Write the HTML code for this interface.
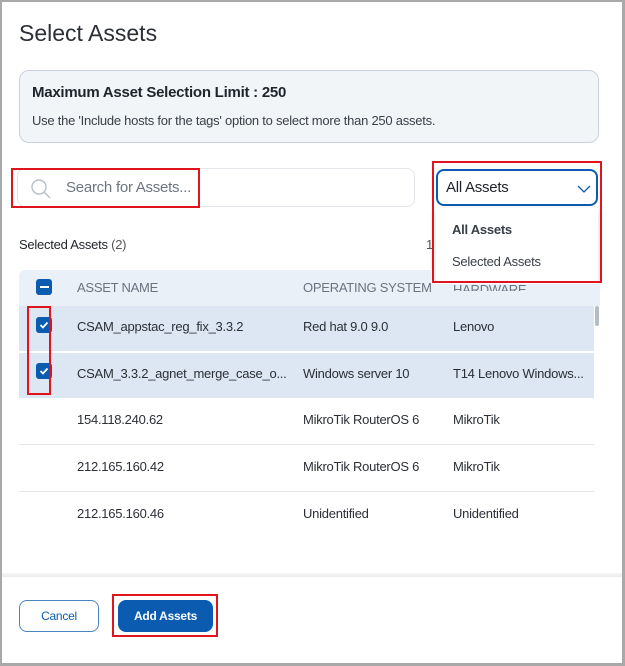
<!DOCTYPE html>
<html><head><meta charset="utf-8"><style>
*{box-sizing:border-box;margin:0;padding:0}
body{width:625px;height:666px;position:relative;overflow:hidden;background:#fff;font-family:"Liberation Sans",Arial,sans-serif;color:#2b2f36}
.frame{position:absolute;left:0;top:0;width:625px;height:666px;border:2px solid #a9a9a9;border-right-width:3px;border-bottom-width:3px}
.abs{position:absolute}
.red{position:absolute;border:2px solid #e0141c}
.t{position:absolute;white-space:nowrap;font-size:13px;letter-spacing:-0.25px}
.cb{position:absolute;width:16px;height:16px;border-radius:3px;background:#0b5cb0}
.row{position:absolute;left:19px;width:575px;border-bottom:1px solid #e3e6ea}
</style></head><body>
<div class="t" style="left:19px;top:20px;font-size:23px;color:#2b2f36;letter-spacing:0">Select Assets</div>
<div class="abs" style="left:19px;top:70px;width:580px;height:73px;background:#f2f5f8;border:1px solid #c9d2dc;border-radius:10px"></div>
<div class="t" style="left:32px;top:84px;font-size:15px;font-weight:bold;color:#1f242b">Maximum Asset Selection Limit : 250</div>
<div class="t" style="left:32px;top:113px;font-size:13px;color:#3a4048">Use the 'Include hosts for the tags' option to select more than 250 assets.</div>

<div class="abs" style="left:17px;top:168px;width:398px;height:39px;border:1px solid #e3e6ea;border-radius:8px"></div>
<svg class="abs" style="left:30px;top:178px" width="22" height="22" viewBox="0 0 22 22"><circle cx="9" cy="9" r="7" fill="none" stroke="#b8bfc8" stroke-width="1.4"/><path d="M14 14l6 6" stroke="#b8bfc8" stroke-width="1.4"/></svg>
<div class="t" style="left:66px;top:179px;font-size:15px;color:#6d7580">Search for Assets...</div>
<div class="red" style="left:11px;top:168px;width:189px;height:40px"></div>

<div class="abs" style="left:436px;top:169px;width:162px;height:37px;border:2px solid #0b5cb0;border-radius:8px"></div>
<div class="t" style="left:446px;top:179px;font-size:15px;color:#1f242b">All Assets</div>
<svg class="abs" style="left:577px;top:184px" width="14" height="10" viewBox="0 0 14 10"><path d="M1 2l6 6 6-6" fill="none" stroke="#0b5cb0" stroke-width="1.3"/></svg>
<div class="abs" style="left:436px;top:208px;width:162px;height:76px;background:#fff;box-shadow:0 3px 8px rgba(0,0,0,.15)"></div>
<div class="t" style="left:452px;top:222px;font-weight:bold;color:#3a4048">All Assets</div>
<div class="t" style="left:452px;top:254px;color:#3a4048">Selected Assets</div>
<div class="red" style="left:432px;top:161px;width:170px;height:122px"></div>

<div class="t" style="left:19px;top:237px;color:#1f242b">Selected Assets <span style="color:#555">(2)</span></div>
<div class="t" style="left:426px;top:237px;color:#555">1</div>

<div class="abs" style="left:19px;top:270px;width:412px;height:36px;background:#eaf0f7;border-radius:6px 0 0 0"></div>
<div class="abs" style="left:431px;top:284px;width:169px;height:22px;background:#eaf0f7"></div>
<div class="cb" style="left:36px;top:279px"><div style="position:absolute;left:3.5px;top:7px;width:9px;height:2px;background:#fff"></div></div>
<div class="t" style="left:77px;top:280px;color:#6a7380">ASSET NAME</div>
<div class="t" style="left:303px;top:280px;color:#6a7380">OPERATING SYSTEM</div>
<div class="t" style="left:453px;top:282px;color:#6a7380;height:9px;overflow:hidden">HARDWARE</div>

<div class="abs" style="left:19px;top:306px;width:575px;height:45px;background:#dce7f3"></div>
<div class="abs" style="left:19px;top:353px;width:575px;height:45px;background:#dce7f3"></div>
<div class="abs" style="left:595px;top:306px;width:4px;height:20px;background:#b4bcc6;border-radius:2px"></div>
<svg class="cb" style="left:36px;top:317px" viewBox="0 0 16 16"><path d="M4.5 8l2.5 2.5 4.5-5" fill="none" stroke="#fff" stroke-width="1.8"/></svg>
<svg class="cb" style="left:36px;top:363px" viewBox="0 0 16 16"><path d="M4.5 8l2.5 2.5 4.5-5" fill="none" stroke="#fff" stroke-width="1.8"/></svg>
<div class="red" style="left:27px;top:306px;width:24px;height:89px"></div>

<div class="t" style="left:77px;top:319px">CSAM_appstac_reg_fix_3.3.2</div>
<div class="t" style="left:303px;top:319px">Red hat 9.0 9.0</div>
<div class="t" style="left:453px;top:319px">Lenovo</div>
<div class="t" style="left:77px;top:366px">CSAM_3.3.2_agnet_merge_case_o...</div>
<div class="t" style="left:303px;top:366px">Windows server 10</div>
<div class="t" style="left:453px;top:366px">T14 Lenovo Windows...</div>

<div class="row" style="top:398px;height:47px"></div>
<div class="row" style="top:445px;height:47px"></div>
<div class="t" style="left:77px;top:412px">154.118.240.62</div>
<div class="t" style="left:303px;top:412px">MikroTik RouterOS 6</div>
<div class="t" style="left:453px;top:412px">MikroTik</div>
<div class="t" style="left:77px;top:459px">212.165.160.42</div>
<div class="t" style="left:303px;top:459px">MikroTik RouterOS 6</div>
<div class="t" style="left:453px;top:459px">MikroTik</div>
<div class="t" style="left:77px;top:506px">212.165.160.46</div>
<div class="t" style="left:303px;top:506px">Unidentified</div>
<div class="t" style="left:453px;top:506px">Unidentified</div>

<div class="abs" style="left:0;top:573px;width:625px;height:4px;background:linear-gradient(#f7f7f7,#ececec)"></div>
<div class="abs" style="left:19px;top:600px;width:80px;height:32px;border:1px solid #0b5cb0;border-radius:8px;opacity:.75"></div>
<div class="t" style="left:19px;top:609px;width:80px;text-align:center;color:#0b5cb0;font-size:12px">Cancel</div>
<div class="abs" style="left:118px;top:600px;width:95px;height:32px;background:#0b5cb0;border-radius:8px"></div>
<div class="t" style="left:118px;top:609px;width:95px;text-align:center;color:#fff;font-size:12px;font-weight:bold">Add Assets</div>
<div class="red" style="left:112px;top:594px;width:106px;height:43px"></div>
<div class="frame"></div>
</body></html>
